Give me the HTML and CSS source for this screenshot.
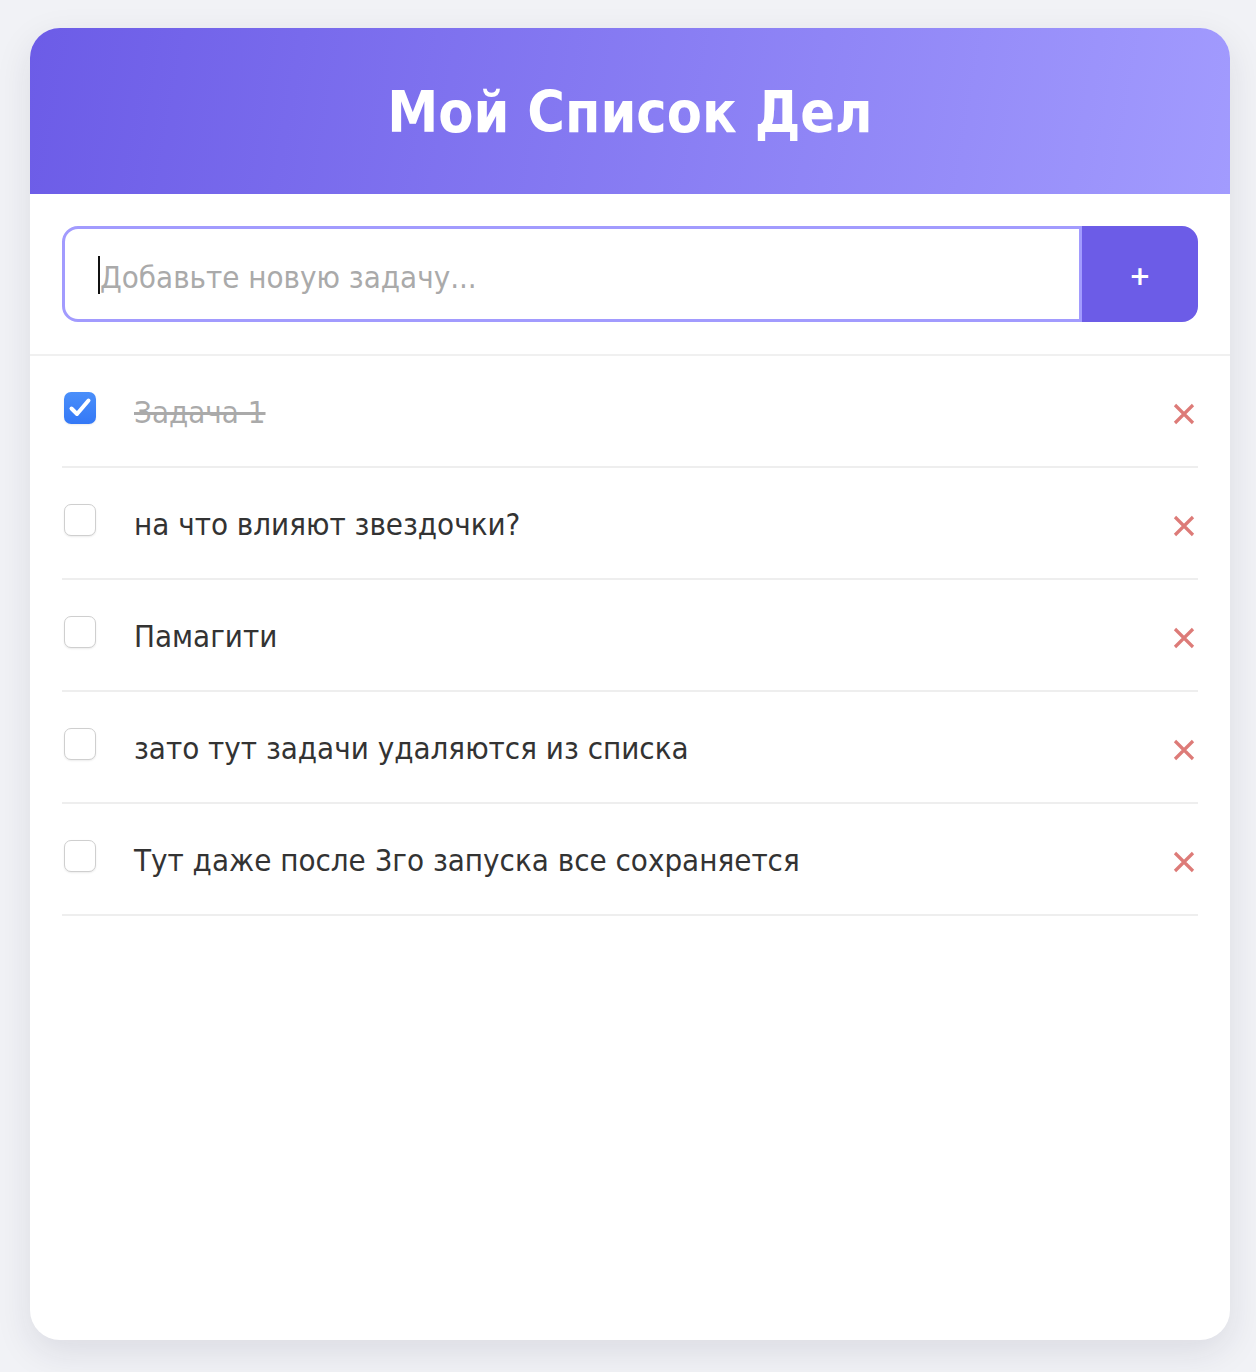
FILE: index.html
```html
<!DOCTYPE html>
<html lang="ru">
<head>
<meta charset="utf-8">
<title>Мой Список Дел</title>
<link rel="stylesheet" href="styles.css">
</head>
<body>
<div class="card">
  <header class="header">
    <h1 class="title">Мой Список Дел</h1>
  </header>
  <div class="add-row">
    <div class="add-form">
      <div class="input"><span class="caret"></span><span class="placeholder">Добавьте новую задачу...</span></div>
      <button class="add-btn" type="button">+</button>
    </div>
  </div>
  <ul class="list">
    <li class="item done">
      <span class="check checked"><svg viewBox="0 0 32 32" width="32" height="32"><path d="M7.5 16.5 L13 22 L24.5 8.5" fill="none" stroke="#fff" stroke-width="4" stroke-linecap="round" stroke-linejoin="round"/></svg></span>
      <span class="text">Задача 1</span>
      <span class="del"><svg viewBox="0 0 24 24" width="24" height="24"><path d="M3 3 L21 21 M21 3 L3 21" stroke="currentColor" stroke-width="3.2"/></svg></span>
    </li>
    <li class="item">
      <span class="check"></span>
      <span class="text">на что влияют звездочки?</span>
      <span class="del"><svg viewBox="0 0 24 24" width="24" height="24"><path d="M3 3 L21 21 M21 3 L3 21" stroke="currentColor" stroke-width="3.2"/></svg></span>
    </li>
    <li class="item">
      <span class="check"></span>
      <span class="text">Памагити</span>
      <span class="del"><svg viewBox="0 0 24 24" width="24" height="24"><path d="M3 3 L21 21 M21 3 L3 21" stroke="currentColor" stroke-width="3.2"/></svg></span>
    </li>
    <li class="item">
      <span class="check"></span>
      <span class="text">зато тут задачи удаляются из списка</span>
      <span class="del"><svg viewBox="0 0 24 24" width="24" height="24"><path d="M3 3 L21 21 M21 3 L3 21" stroke="currentColor" stroke-width="3.2"/></svg></span>
    </li>
    <li class="item">
      <span class="check"></span>
      <span class="text">Тут даже после 3го запуска все сохраняется</span>
      <span class="del"><svg viewBox="0 0 24 24" width="24" height="24"><path d="M3 3 L21 21 M21 3 L3 21" stroke="currentColor" stroke-width="3.2"/></svg></span>
    </li>
  </ul>
</div>
</body>
</html>
```
FILE: styles.css
```css
* { box-sizing: border-box; }
html, body { margin: 0; }
body {
  background: #f1f2f6;
  padding: 28px 26px 32px 30px;
  font-family: "DejaVu Sans Condensed", "DejaVu Sans", sans-serif;
}
.card {
  width: 1200px;
  min-height: 1312px;
  background: #fff;
  border-radius: 30px;
  overflow: hidden;
  box-shadow: 0 12px 36px rgba(30, 30, 60, 0.10);
}
.header {
  height: 166px;
  display: flex;
  align-items: center;
  justify-content: center;
  background: linear-gradient(100deg, #6c5ce7 0%, #a29bfe 100%);
}
.title {
  margin: 2px 0 0;
  color: #fff;
  font-size: 57px;
  font-weight: bold;
}
.add-row {
  padding: 32px;
  border-bottom: 2px solid #f0f0f0;
}
.add-form {
  display: flex;
  height: 96px;
}
.input {
  flex: 1;
  display: flex;
  align-items: center;
  border: 3px solid #a29bfe;
  border-radius: 16px 0 0 16px;
  padding: 5px 0 0 33px;
  font-size: 31px;
}
.caret {
  width: 2px;
  height: 38px;
  background: #111;
  margin-top: -3px;
}
.placeholder { color: #aaa; }
.add-btn {
  width: 116px;
  border: none;
  background: #6c5ce7;
  color: #fff;
  font-family: "DejaVu Sans", sans-serif;
  font-size: 26px;
  font-weight: bold;
  border-radius: 0 16px 16px 0;
  padding: 4px 0 0;
}
.list {
  list-style: none;
  margin: 0;
  padding: 0 32px;
}
.item {
  height: 112px;
  display: flex;
  align-items: center;
  border-bottom: 2px solid #eeeeee;
  font-size: 31px;
  color: #333;
}
.check {
  width: 32px;
  height: 32px;
  margin: 0 38px 6px 2px;
  border-radius: 7px;
  border: 1px solid #cfcfcf;
  background: #fff;
  box-shadow: 0 1px 2px rgba(0,0,0,0.08);
  flex: none;
}
.check.checked {
  border: none;
  background: linear-gradient(#4a8ffa, #3478f6);
}
.check svg { display: block; }
.text { flex: 1; padding-top: 2px; }
.done .text {
  color: #aaa;
  text-decoration: line-through;
}
.del {
  color: #dd7b78;
  width: 24px;
  height: 24px;
  margin-right: 2px;
  margin-top: 6px;
}
.del svg { display: block; }
```
